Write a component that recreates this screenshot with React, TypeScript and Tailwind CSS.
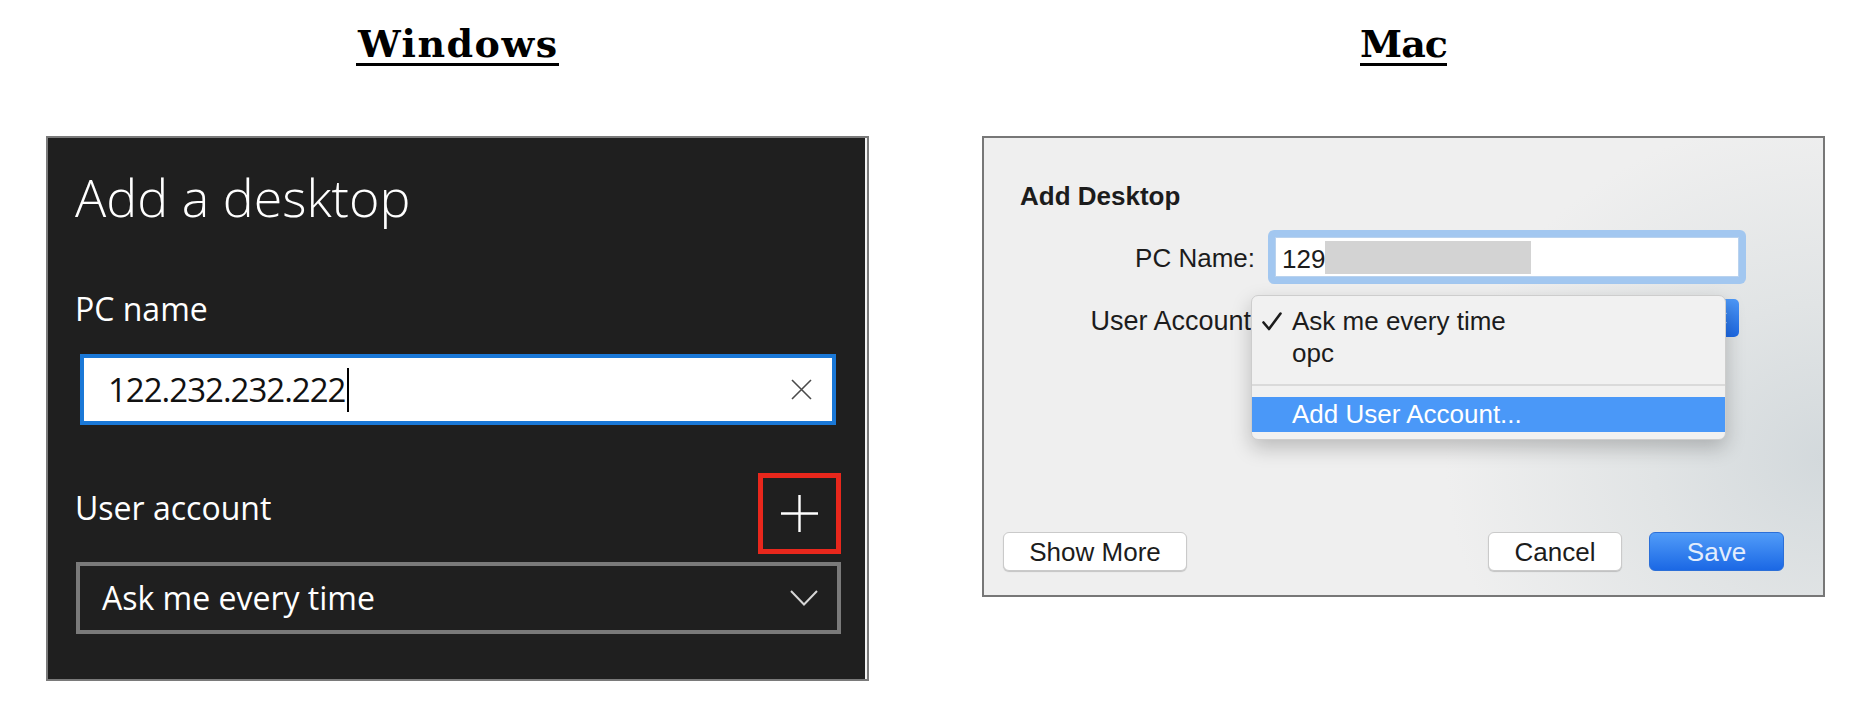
import React from "react";

function WindowsPanel() {
  return (
    <div className="mt-[70px] w-[823px] h-[545px] border-2 border-[#7a7a7a] bg-[#1f1f1f]">
      <div className="h-full border-r-2 border-[#f2f2f2] flex flex-col font-['Open_Sans',sans-serif] text-white">
        <div className="mt-[33px] ml-[27px] text-[52px] font-light leading-[52px]">Add a desktop</div>
        <div className="mt-[70px] ml-[27px] text-[32px] leading-[31px]">PC name</div>
        <div className="mt-[30px] ml-[32px] w-[756px] h-[71px] border-4 border-[#1a78d7] bg-white flex items-center pl-[24px] pr-[20px]">
          <span className="text-[33px] leading-[33px] text-[#111] tracking-[-1px]">122.232.232.222</span>
          <span className="ml-[2px] w-[2px] h-[44px] bg-black" />
          <svg className="ml-auto" width="21" height="21" viewBox="0 0 21 21">
            <path d="M1 1 L20 20 M20 1 L1 20" stroke="#4a4a4a" strokeWidth="1.6" fill="none" />
          </svg>
        </div>
        <div className="mt-[48px] ml-[27px] w-[766px] flex items-start justify-between">
          <div className="mt-[19px] text-[32px] leading-[31px]">User account</div>
          <div className="w-[83px] h-[81px] border-[5px] border-[#e8271c] flex items-center justify-center">
            <svg width="37" height="37" viewBox="0 0 37 37">
              <path d="M18.5 0 V37 M0 18.5 H37" stroke="#ffffff" strokeWidth="2.4" fill="none" />
            </svg>
          </div>
        </div>
        <div className="mt-[8px] ml-[28px] w-[765px] h-[72px] border-4 border-[#7a7a7a] flex items-center pl-[22px] pr-[19px]">
          <span className="text-[32px] leading-[32px]">Ask me every time</span>
          <svg className="ml-auto" width="28" height="16" viewBox="0 0 28 16">
            <path d="M1 1 L14 14.5 L27 1" stroke="#d6d6d6" strokeWidth="2" fill="none" />
          </svg>
        </div>
      </div>
    </div>
  );
}

function MacPanel() {
  return (
    <div className="mt-[70px] w-[843px] h-[461px] border-2 border-[#777777] bg-[#efefef] bg-[radial-gradient(ellipse_45%_75%_at_100%_70%,#d3d9dc_0%,#e1e4e5_45%,#efefef_100%)] flex flex-col font-['Liberation_Sans',Arial,sans-serif] text-[#1c1c1c]">
      <div className="mt-[45px] ml-[36px] text-[26px] font-bold leading-[26px]">Add Desktop</div>

      <div className="mt-[21px] flex items-center">
        <div className="w-[271px] mt-[3px] text-right text-[26px] leading-[25px]">PC Name:</div>
        <div className="ml-[13px] w-[478px] h-[54px] rounded-[6px] bg-[#a2c7f0] p-[7px]">
          <div className="h-[40px] bg-white flex items-center pl-[6px] border border-[#b9d2ee]">
            <span className="mt-[4px] text-[26px] leading-[25px]">129</span>
            <span className="w-[206px] h-[33px] bg-[#d3d3d3]" />
          </div>
        </div>
      </div>

      <div className="mt-[15px] flex items-center">
        <div className="w-[267px] mt-[6px] text-right text-[27px] leading-[25px] whitespace-nowrap">User Account</div>
        <div className="ml-[17px] relative w-[471px] h-[38px]">
          <div className="absolute right-0 top-0 w-[34px] h-[38px] rounded-[5px] bg-[linear-gradient(#4d98f7,#1c68e4)] flex items-center justify-center">
            <svg width="14" height="26" viewBox="0 0 14 26">
              <path d="M3 9 L7 4 L11 9 M3 17 L7 22 L11 17" stroke="#ffffff" strokeWidth="2" fill="none" />
            </svg>
          </div>
          <div className="absolute left-[-17px] top-[-4px] w-[475px] rounded-[7px] bg-[#f1f1f1] border border-[#cdcdcd] shadow-[0_8px_20px_rgba(0,0,0,0.22)] pt-[9px] pb-[7px] text-[26px]">
            <div className="relative h-[32px] flex items-center pl-[40px] leading-[25px]">
              <svg className="absolute left-[10px] top-[7px]" width="20" height="19" viewBox="0 0 20 19">
                <path d="M1.5 10.5 L7 17 L18.5 1.5" stroke="#1c1c1c" strokeWidth="2.6" fill="none" strokeLinecap="round" strokeLinejoin="round" />
              </svg>
              Ask me every time
            </div>
            <div className="h-[32px] flex items-center pl-[40px] leading-[25px]">opc</div>
            <div className="mt-[15px] h-[2px] bg-[#dadada]" />
            <div className="mt-[11px] h-[35px] bg-[#4a98f8] text-white flex items-center pl-[40px] leading-[25px]">
              Add User Account...
            </div>
          </div>
        </div>
      </div>

      <div className="mt-auto mb-[24px] flex items-center pl-[19px] pr-[39px] text-[26px]">
        <div className="w-[184px] h-[39px] rounded-[6px] bg-white border border-[#cacaca] shadow-[0_1px_1px_rgba(0,0,0,0.18)] flex items-center justify-center leading-none">
          Show More
        </div>
        <div className="ml-auto w-[134px] h-[39px] rounded-[6px] bg-white border border-[#cacaca] shadow-[0_1px_1px_rgba(0,0,0,0.18)] flex items-center justify-center leading-none">
          Cancel
        </div>
        <div className="ml-[27px] w-[135px] h-[39px] rounded-[6px] bg-[linear-gradient(#519cf8,#1b68e5)] border border-[#2b6fd8] flex items-center justify-center leading-none text-[#e3edfd]">
          Save
        </div>
      </div>
    </div>
  );
}

export default function App() {
  return (
    <div className="w-[1874px] h-[718px] bg-white overflow-hidden flex items-start pl-[46px] gap-[113px]">
      <div className="w-[823px] flex flex-col items-center">
        <div className="mt-[25px] pl-[1.5px] text-[38px] leading-[38px] font-bold tracking-[1.5px] text-black border-b-[3px] border-black font-['DejaVu_Serif',serif]">
          Windows
        </div>
        <WindowsPanel />
      </div>
      <div className="w-[843px] flex flex-col items-center">
        <div className="mt-[25px] text-[38px] leading-[38px] font-bold tracking-[-1px] text-black border-b-[3px] border-black font-['DejaVu_Serif',serif]">
          Mac
        </div>
        <MacPanel />
      </div>
    </div>
  );
}
